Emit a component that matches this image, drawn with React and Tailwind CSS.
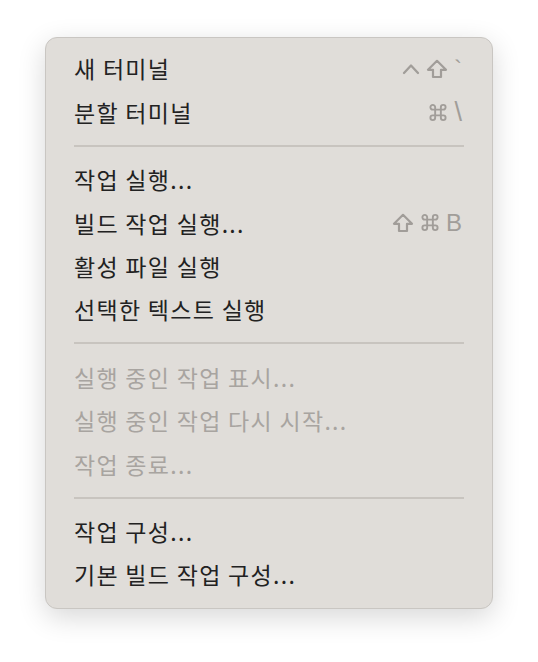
import { Fragment } from 'react';

const Ctrl = () => (
  <svg width="18" height="13" viewBox="0 0 18 13" fill="none" stroke="currentColor" strokeWidth="2.3" strokeLinecap="round" strokeLinejoin="round">
    <path d="M2 11 L9 3.5 L16 11" />
  </svg>
);

const Shift = () => (
  <svg width="22" height="20" viewBox="0 0 22 20" fill="none" stroke="currentColor" strokeWidth="2.2" strokeLinejoin="round">
    <path d="M11 1.8 L20 10.8 L15 10.8 L15 18 L7 18 L7 10.8 L2 10.8 Z" />
  </svg>
);

const Cmd = () => (
  <svg width="20" height="19" viewBox="0 0 20 20" fill="none" stroke="currentColor" strokeWidth="2" strokeLinejoin="round">
    <path d="M7 7 V4.5 A2.5 2.5 0 1 0 4.5 7 H15.5 A2.5 2.5 0 1 0 13 4.5 V15.5 A2.5 2.5 0 1 0 15.5 13 H4.5 A2.5 2.5 0 1 0 7 15.5 Z" />
  </svg>
);

const Char = ({ c, big }) => (
  <span className={`${big ? 'text-[27px]' : 'text-[24px]'} leading-none`} style={{ fontFamily: '"Liberation Sans", Arial, sans-serif' }}>{c}</span>
);

const groups = [
  [
    { label: '새 터미널', keys: [<Ctrl />, <Shift />, <Char c="`" />] },
    { label: '분할 터미널', keys: [<Cmd />, <Char c={'\\'} big />] },
  ],
  [
    { label: '작업 실행...' },
    { label: '빌드 작업 실행...', keys: [<Shift />, <Cmd />, <Char c="B" />] },
    { label: '활성 파일 실행' },
    { label: '선택한 텍스트 실행' },
  ],
  [
    { label: '실행 중인 작업 표시...', disabled: true },
    { label: '실행 중인 작업 다시 시작...', disabled: true },
    { label: '작업 종료...', disabled: true },
  ],
  [
    { label: '작업 구성...' },
    { label: '기본 빌드 작업 구성...' },
  ],
];

export default function App() {
  return (
    <div className="w-[538px] h-[662px] bg-white pt-[37px] pl-[45px]" style={{ fontFamily: '"Noto Sans CJK KR", "Noto Sans", sans-serif' }}>
      {/* Menu */}
      <div className="w-[448px] rounded-[12px] border border-[#c9c6c2] bg-[#e0ddd9] pt-[9px] pb-[12px] shadow-[0_8px_28px_rgba(0,0,0,0.16)]">
        {groups.map((items, gi) => (
          <Fragment key={gi}>
            {gi > 0 && (
              <div className="h-[24px] flex items-center px-[28px]">
                <div className="h-[2px] w-full bg-[#c8c4bf]" />
              </div>
            )}
            {items.map((item) => (
              <div key={item.label} className="h-[43.4px] flex items-center justify-between pl-[28px] pr-[30px]">
                <span className={`text-[23px] tracking-[1.3px] ${item.disabled ? 'text-[#a8a4a0]' : 'text-[#222222]'}`}>{item.label}</span>
                {item.keys && (
                  <span className="flex items-center gap-[6px] text-[#a19d99]">
                    {item.keys.map((k, i) => (
                      <Fragment key={i}>{k}</Fragment>
                    ))}
                  </span>
                )}
              </div>
            ))}
          </Fragment>
        ))}
      </div>
    </div>
  );
}
